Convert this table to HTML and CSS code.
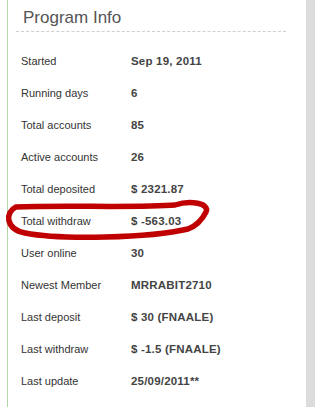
FILE: index.html
```html
<!DOCTYPE html>
<html>
<head>
<meta charset="utf-8">
<link rel="stylesheet" href="styles.css">
</head>
<body>
<div class="page">
  <div class="main">
    <div class="header"><h1 class="title">Program Info</h1></div>
    <div class="rows">
      <div class="row"><span class="label">Started</span><span class="value">Sep 19, 2011</span></div>
      <div class="row"><span class="label">Running days</span><span class="value">6</span></div>
      <div class="row"><span class="label">Total accounts</span><span class="value">85</span></div>
      <div class="row"><span class="label">Active accounts</span><span class="value">26</span></div>
      <div class="row"><span class="label">Total deposited</span><span class="value">$ 2321.87</span></div>
      <div class="row hl"><span class="label">Total withdraw</span><span class="value">$ -563.03</span>
        <svg class="circle" width="220" height="50" viewBox="0 0 220 50">
          <path d="M16 12 C 60 10, 140 13, 175 10 C 190 5, 210 8, 206 17 C 202 25, 196 31, 188 34 C 150 43, 60 45, 25 38 C 5 34, 5 17, 16 12" fill="none" stroke="#c00000" stroke-width="5.5" stroke-linecap="round" stroke-linejoin="round"/>
        </svg>
      </div>
      <div class="row"><span class="label">User online</span><span class="value">30</span></div>
      <div class="row"><span class="label">Newest Member</span><span class="value">MRRABIT2710</span></div>
      <div class="row"><span class="label">Last deposit</span><span class="value">$ 30 (FNAALE)</span></div>
      <div class="row"><span class="label">Last withdraw</span><span class="value">$ -1.5 (FNAALE)</span></div>
      <div class="row"><span class="label">Last update</span><span class="value">25/09/2011**</span></div>
    </div>
  </div>
  <div class="scroll"></div>
</div>
</body>
</html>
```
FILE: styles.css
```css
html, body {
  margin: 0;
  padding: 0;
  background: #fff;
}
.page {
  display: flex;
  height: 407px;
  width: 315px;
}
.main {
  flex: 1;
  margin-left: 7px;
  border-left: 1px solid #b3d6a9;
}
.scroll {
  width: 9px;
  background: #dcdcdc;
}
.header {
  margin-left: 8px;
  width: 270px;
  border-bottom: 1px dashed #cfcfcf;
  padding: 8px 0 4px 7px;
  box-sizing: border-box;
}
.title {
  margin: 0;
  font-family: "Liberation Sans", Arial, sans-serif;
  font-weight: normal;
  font-size: 17px;
  line-height: 19px;
  color: #555;
}
.rows {
  padding-top: 13px;
}
.row {
  position: relative;
  display: flex;
  align-items: center;
  height: 32px;
  padding-left: 13px;
  font-family: "Liberation Sans", Arial, sans-serif;
  font-size: 11px;
}
.label {
  width: 110px;
  color: #333;
}
.value {
  font-weight: bold;
  font-size: 11.5px;
  letter-spacing: 0.2px;
  color: #444;
}
.circle {
  position: absolute;
  left: -8px;
  top: -10px;
}
```
